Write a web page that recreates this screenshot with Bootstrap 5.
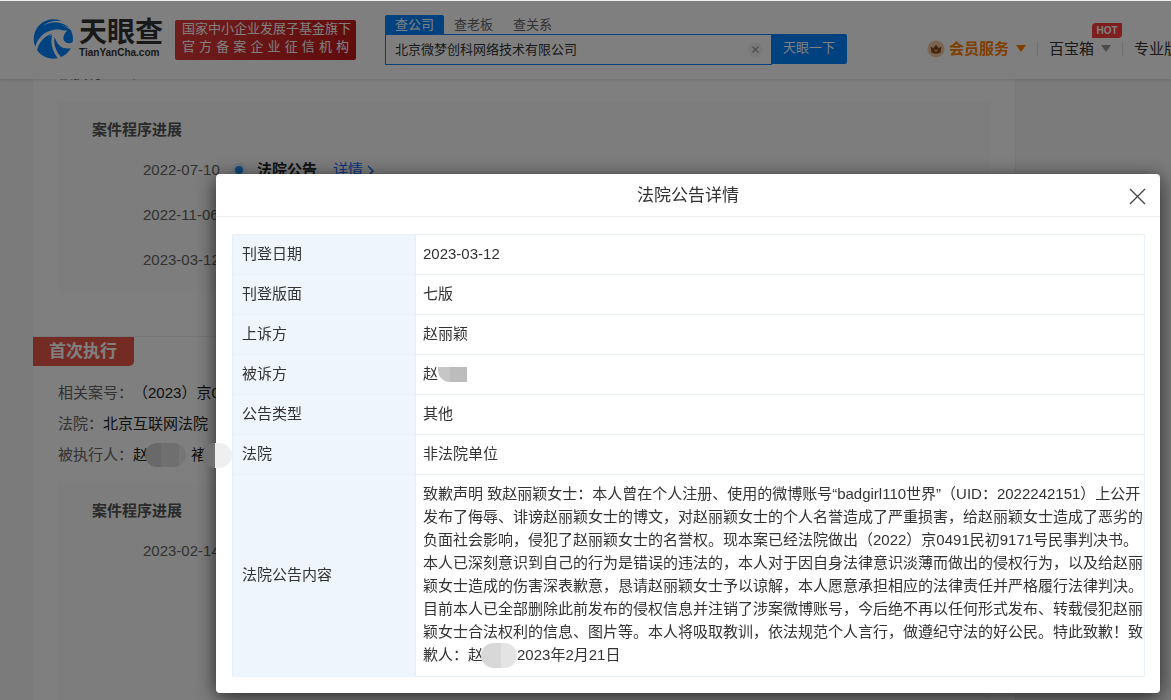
<!DOCTYPE html>
<html lang="zh-CN">
<head>
<meta charset="utf-8">
<meta name="viewport" content="width=device-width, initial-scale=1">
<title>天眼查</title>
<link href="https://cdn.jsdelivr.net/npm/bootstrap@5.3.0/dist/css/bootstrap.min.css" rel="stylesheet">
<style>
  html, body { height: 100%; }
  body { font-family: "Liberation Sans", "Noto Sans CJK SC", sans-serif; font-size: 15px; line-height: 23px; color: #333; background: #f6f6f6; overflow: hidden; }
  a { text-decoration: none; }

  /* top bar */
  .site-bar { height: 79px; background: #fff; border-top: 1px solid #f0f0f0; box-shadow: 0 1px 3px rgba(0,0,0,.12); padding: 0 0 0 33px; flex-wrap: nowrap; justify-content: flex-start; overflow: hidden; z-index: 10; align-items: flex-start; }
  .brand { color: #333; width: 142px; margin-top: 17px; gap: 5px; }
  .brand-name { font-size: 28px; line-height: 30px; font-weight: 700; }
  .brand-site { font-size: 10px; line-height: 10px; font-weight: 700; }
  .slogan { width: 181px; height: 40px; margin-top: 19px; padding: 0 7px; color: #fff; background: linear-gradient(120deg, #e03c3c, #c21818); border-radius: 2px; }
  .slogan div { font-size: 13px; line-height: 18px; text-align-last: justify; white-space: nowrap; }
  .search { width: 462px; margin: 14px 0 0 29px; }
  .search .nav-link { font-size: 13px; line-height: 19px; padding: 0 10px; color: #666; border-radius: 2px 2px 0 0; }
  .search .nav-link.active { background: #0084ff; color: #fff; }
  .search .form-control { height: 31px; padding: 0 9px 2px; font-size: 13px; color: #333; border: 1px solid #0084ff; border-radius: 0; box-shadow: none; }
  .search .btn-go { height: 30px; width: 76px; padding: 0 0 2px; font-size: 13px; color: #fff; background: #0084ff; border-radius: 0 2px 2px 0; }
  .clear-btn { right: 84px; top: 8px; width: 15px; height: 15px; background: #f3f3f3; z-index: 5; border: 0; padding: 0; line-height: 0; }
  .tools { margin: 36px 0 0 80px; white-space: nowrap; }
  .tools a { color: #333; }
  .tools .vip { color: #ff7d00; font-weight: 700; }
  .tri { width: 10px; height: 7px; margin-left: 7px; }
  .rule { width: 1px; height: 14px; margin: 0 11px; background: #e4e4e4; }
  .hot { top: -14px; left: 43px; width: 30px; height: 15px; font-size: 10px; line-height: 15px; padding: 0; background: #ff3c3c; border-radius: 4px 0 4px 0; }

  /* case record */
  .record { min-height: 0; margin: -22px 155px 0 33px; background: #fff; border-right: 1px solid #efefef; }
  .record dl { margin: 0; padding: 0 25px; }
  .record dl > div { height: 31px; line-height: 31px; }
  .record dt { font-weight: 400; color: #666; }
  .record dd { margin: 0; color: #222; }
  .progress-box { margin: 14px 25px 0; padding: 17px 34px 10px; background: #fafafa; }
  .progress-box h2 { font-size: 15px; line-height: 22px; font-weight: 700; margin: 0 0 6px; color: #555; }
  .progress-box li { height: 45px; line-height: 45px; padding-left: 51px; color: #666; }
  .progress-box time { width: 77px; }
  .node { width: 8px; height: 8px; background: #1e8fff; box-shadow: 0 0 0 3px #e0f0ff; margin: 0 14px 0 15px; }
  .stage { min-height: 0; margin-top: 44px; border-top: 1px solid #eee; }
  .stage-tag { height: 29px; line-height: 29px; padding: 0 17px 0 16px; background: #e85749; color: #fff; font-size: 17px; font-weight: 700; border-radius: 0 0 5px 0; }
  .stage dl { padding-top: 11px; }
  .stage .progress-box { margin-top: 13px; }
  .smudge { top: 4px; left: 12px; width: 41px; height: 24px; border-radius: 12px; background: linear-gradient(90deg, #d2d2d2 40%, #dedede 40% 82%, #ececec 82%); }
  .record .next-party { margin-left: 43px; }

  /* notice dialog */
  .modal-backdrop { top: 1px; height: auto; bottom: 0; width: 100%; }
  .modal { overflow: hidden; }
  .notice { max-width: none; margin: 174px 11px 0 216px; }
  .notice .modal-content { border: 0; border-radius: 4px; color: #333; box-shadow: 0 4px 20px rgba(0,0,0,.7); }
  .notice .modal-header { height: 43px; padding: 0; border-bottom: 1px solid #eee; justify-content: center; }
  .notice .modal-title { font-size: 17px; line-height: 23px; font-weight: 400; }
  .close-x { right: 14px; top: 14px; width: 17px; height: 17px; padding: 0; border: 0; background: none; line-height: 0; }
  .notice .modal-body { padding: 17px 15px 16px 16px; }
  .notice .table { margin: 0; color: #333; border-color: #e9f1fa; table-layout: fixed; }
  .notice .table th, .notice .table td { padding: 7px 0 9px 7px; vertical-align: middle; text-spacing-trim: space-all; }
  .notice .table th { width: 183px; padding-left: 9px; font-weight: 400; background: #eef5fd; border-color: #e5eff9; }
  .mask-a { width: 29px; height: 15px; vertical-align: -3px; border-radius: 0 0 0 12px; background: linear-gradient(90deg, #c6c6c6 40%, #bcbcbc 40%); }
  .mask-b { width: 36px; height: 25px; margin: -1px 0 -1px -2px; vertical-align: -7px; border-radius: 14px; background: linear-gradient(90deg, #d8d8d8 55%, #e4e4e4 55%); }
  .mask-c { left: -14px; top: 269px; width: 30px; height: 25px; border-radius: 13px; background: linear-gradient(90deg, #717171 13px, #efefef 13px); }
</style>
</head>
<body class="d-flex flex-column">

<header class="site-bar navbar position-relative flex-shrink-0">
  <a class="brand d-flex flex-shrink-0" href="#">
    <svg class="flex-shrink-0" width="41" height="42" viewBox="15 12 123 126" aria-hidden="true">
      <circle cx="76" cy="75" r="59" fill="#0084ff"/>
      <path d="M40 38C62 22 98 24 128 48l8-4-6-14C108 18 70 14 40 38z" fill="#fff"/>
      <path d="M44 39C68 18 104 20 127 44 104 29 72 28 44 39z" fill="#0084ff"/>
      <path d="M20 104C26 74 48 52 78 47c12-2 22 0 28 3-10 0-18 4-23 11-24 4-44 22-56 53z" fill="#fff"/>
      <path d="M27 108C34 84 50 66 74 58 54 74 44 94 42 122z" fill="#0084ff"/>
      <path d="M74 60c-8 22-4 48 16 74l10-4C82 110 76 90 80 68c4 16 14 30 28 34 10 3 20 1 28-4l4-16c-14 10-32 6-34-8 0-10 4-18 12-24-14-4-30 0-44 10z" fill="#fff"/>
      <path d="M80 84c8 14 22 26 42 26-6 6-12 12-20 16C90 116 82 102 80 84z" fill="#0084ff"/>
    </svg>
    <span class="d-flex flex-column"><span class="brand-name">天眼查</span><span class="brand-site">TianYanCha.com</span></span>
  </a>
  <div class="slogan flex-shrink-0"><div>国家中小企业发展子基金旗下</div><div>官方备案企业征信机构</div></div>

  <form class="search flex-shrink-0" role="search">
    <nav class="nav">
      <a class="nav-link active" href="#">查公司</a>
      <a class="nav-link" href="#">查老板</a>
      <a class="nav-link" href="#">查关系</a>
    </nav>
    <div class="input-group position-relative">
      <input class="form-control" type="text" aria-label="公司名称" value="北京微梦创科网络技术有限公司">
      <button class="clear-btn position-absolute rounded-circle" type="button" aria-label="清空"><svg width="7" height="7" viewBox="0 0 7 7"><path d="M.5.5l6 6M6.500.5l-6 6" stroke="#999" stroke-width="1.200"/></svg></button>
      <button class="btn btn-go" type="button">天眼一下</button>
    </div>
  </form>

  <nav class="tools d-flex align-items-center flex-shrink-0">
    <svg class="me-1" width="18" height="18" viewBox="0 0 18 18" aria-hidden="true"><circle cx="9" cy="9" r="8.500" fill="#f5c9a4"/><path d="M3.500 6.500L6.500 8 9 4.500 11.500 8l3-1.500-1 6c-1 1.500-8 1.500-9 0z" fill="#8a4a1c"/><path d="M7.500 9.500L9 11.500l1.500-2" fill="none" stroke="#f5c9a4"/></svg>
    <a class="vip" href="#">会员服务</a>
    <svg class="tri" viewBox="0 0 10 7"><path d="M0 0h10L5 7z" fill="#ff7d00"/></svg>
    <span class="rule"></span>
    <a class="position-relative" href="#">百宝箱<span class="hot badge position-absolute">HOT</span></a>
    <svg class="tri" viewBox="0 0 10 7"><path d="M0 0h10L5 7z" fill="#999"/></svg>
    <span class="rule"></span>
    <a href="#">专业版</a>
  </nav>
</header>

<main class="record d-flex flex-column flex-grow-1">
  <dl>
    <div class="d-flex"><dt>被执行人：</dt><dd>赵</dd></div>
  </dl>
  <section class="progress-box">
    <h2>案件程序进展</h2>
    <ul class="list-unstyled m-0">
      <li class="d-flex align-items-center"><time>2022-07-10</time><span class="node rounded-circle"></span><b class="text-dark">法院公告</b><a class="ms-3" href="#">详情<svg class="ms-1" width="7" height="12" viewBox="0 0 7 12"><path d="M1 1l5 5-5 5" fill="none" stroke="#0d6efd" stroke-width="1.500"/></svg></a></li>
      <li class="d-flex"><time>2022-11-06</time></li>
      <li class="d-flex"><time>2023-03-12</time></li>
    </ul>
  </section>

  <section class="stage d-flex flex-column flex-grow-1">
    <span class="stage-tag align-self-start flex-shrink-0">首次执行</span>
    <dl>
      <div class="d-flex"><dt>相关案号：</dt><dd>（2023）京0491执1532号</dd></div>
      <div class="d-flex"><dt>法院：</dt><dd>北京互联网法院</dd></div>
      <div class="d-flex"><dt>被执行人：</dt><dd class="position-relative">赵<span class="smudge position-absolute"></span></dd><dd class="next-party">褚</dd></div>
    </dl>
    <section class="progress-box flex-grow-1">
      <h2>案件程序进展</h2>
      <ul class="list-unstyled m-0"><li class="d-flex"><time>2023-02-14</time></li></ul>
    </section>
  </section>
</main>

<div class="modal-backdrop show"></div>
<div class="modal show d-block" role="dialog" aria-modal="true" aria-labelledby="noticeTitle">
  <div class="modal-dialog notice">
    <div class="modal-content">
      <div class="modal-header position-relative">
        <h1 class="modal-title" id="noticeTitle">法院公告详情</h1>
        <button class="close-x position-absolute" type="button" aria-label="关闭"><svg width="17" height="17" viewBox="0 0 17 17"><path d="M1 1l15 15M16 1L1 16" stroke="#444" stroke-width="1.300"/></svg></button>
      </div>
      <div class="modal-body">
        <table class="table table-bordered">
          <tbody>
            <tr><th scope="row">刊登日期</th><td>2023-03-12</td></tr>
            <tr><th scope="row">刊登版面</th><td>七版</td></tr>
            <tr><th scope="row">上诉方</th><td>赵丽颖</td></tr>
            <tr><th scope="row">被诉方</th><td>赵<span class="mask-a d-inline-block"></span></td></tr>
            <tr><th scope="row">公告类型</th><td>其他</td></tr>
            <tr><th scope="row">法院</th><td>非法院单位</td></tr>
            <tr><th scope="row">法院公告内容</th><td>致歉声明 致赵丽颖女士：本人曾在个人注册、使用的微博账号“badgirl110世界”（UID：2022242151）上公开发布了侮辱、诽谤赵丽颖女士的博文，对赵丽颖女士的个人名誉造成了严重损害，给赵丽颖女士造成了恶劣的负面社会影响，侵犯了赵丽颖女士的名誉权。现本案已经法院做出（2022）京0491民初9171号民事判决书。本人已深刻意识到自己的行为是错误的违法的，本人对于因自身法律意识淡薄而做出的侵权行为，以及给赵丽颖女士造成的伤害深表歉意，恳请赵丽颖女士予以谅解，本人愿意承担相应的法律责任并严格履行法律判决。目前本人已全部删除此前发布的侵权信息并注销了涉案微博账号，今后绝不再以任何形式发布、转载侵犯赵丽颖女士合法权利的信息、图片等。本人将吸取教训，依法规范个人言行，做遵纪守法的好公民。特此致歉！致歉人：赵<span class="mask-b d-inline-block"></span>2023年2月21日</td></tr>
          </tbody>
        </table>
      </div>
      <span class="mask-c position-absolute"></span>
    </div>
  </div>
</div>

<script src="https://cdn.jsdelivr.net/npm/bootstrap@5.3.0/dist/js/bootstrap.bundle.min.js"></script>
</body>
</html>
